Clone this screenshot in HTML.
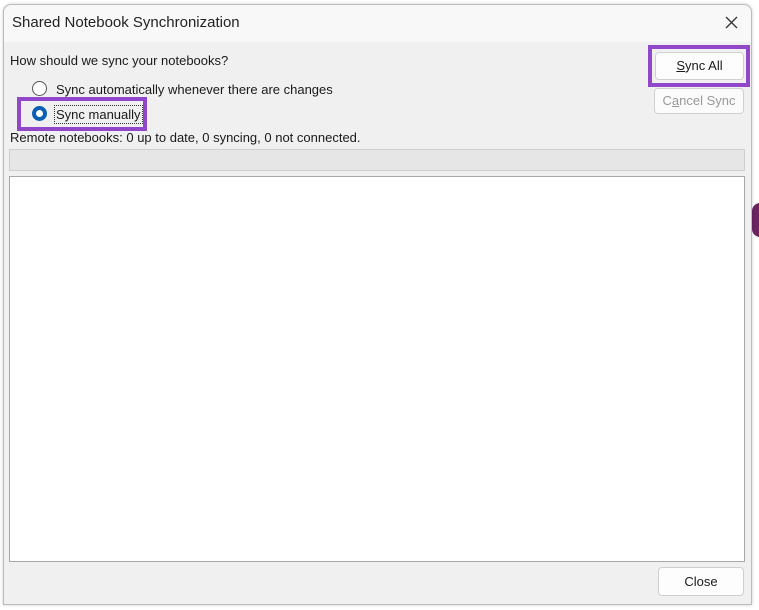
<!DOCTYPE html>
<html><head><style>
*{margin:0;padding:0;box-sizing:border-box}
body{width:759px;height:610px;background:#fff;position:relative;overflow:hidden;font-family:"Liberation Sans",sans-serif;font-size:13px;color:#1a1a1a}
.a{position:absolute}
.dlg{left:3px;top:4px;width:749px;height:601px;background:#f0f0f0;border:1px solid #bcbcbc;border-radius:8px 8px 0 0;box-shadow:0 0 3px rgba(0,0,0,.2)}
.btn{background:#fdfdfd;border:1px solid #d0d0d0;border-radius:4px;text-align:center;font-size:13px}
.hl{border:4px solid #9147c9}
</style></head><body>
<div class="a" style="left:752px;top:203px;width:8px;height:34px;background:#6b2461;border-radius:8px 0 0 8px"></div>
<div class="a dlg"></div>
<div class="a" style="left:4px;top:5px;width:747px;height:37px;background:#f8f8f8;border-radius:8px 8px 0 0"></div>
<div class="a" style="left:12px;top:14px;font-size:15px;color:#222">Shared Notebook Synchronization</div>
<svg class="a" style="left:725px;top:16px" width="13" height="13"><path d="M1 1L12 12M12 1L1 12" stroke="#333" stroke-width="1.3"/></svg>
<div class="a" style="left:10px;top:53px">How should we sync your notebooks?</div>
<div class="a" style="left:32px;top:81px;width:15px;height:15px;border:1px solid #555;border-radius:50%;background:#fff"></div>
<div class="a" style="left:56px;top:82px">Sync automatically whenever there are changes</div>
<div class="a hl" style="left:17px;top:97px;width:130px;height:34px"></div>
<div class="a" style="left:32px;top:106px;width:15px;height:15px;border-radius:50%;background:#0a5fb4"><div class="a" style="left:4px;top:4px;width:7px;height:7px;border-radius:50%;background:#fff"></div></div>
<div class="a" style="left:54px;top:105px;padding:1px;border:1px dotted #333">Sync manually</div>
<div class="a" style="left:10px;top:130px">Remote notebooks: 0 up to date, 0 syncing, 0 not connected.</div>
<div class="a" style="left:9px;top:149px;width:736px;height:22px;background:#e6e6e6;border:1px solid #cfcfcf"></div>
<div class="a" style="left:9px;top:176px;width:736px;height:386px;background:#fff;border:1px solid #a8a8a8"></div>
<div class="a hl" style="left:648px;top:45px;width:102px;height:42px"></div>
<div class="a btn" style="left:655px;top:52px;width:89px;height:28px;line-height:26px"><u>S</u>ync All</div>
<div class="a btn" style="left:654px;top:88px;width:90px;height:26px;line-height:24px;color:#999;background:#fbfbfb"><span>C<u>a</u>ncel Sync</span></div>
<div class="a btn" style="left:658px;top:567px;width:86px;height:29px;line-height:27px">Close</div>
</body></html>
